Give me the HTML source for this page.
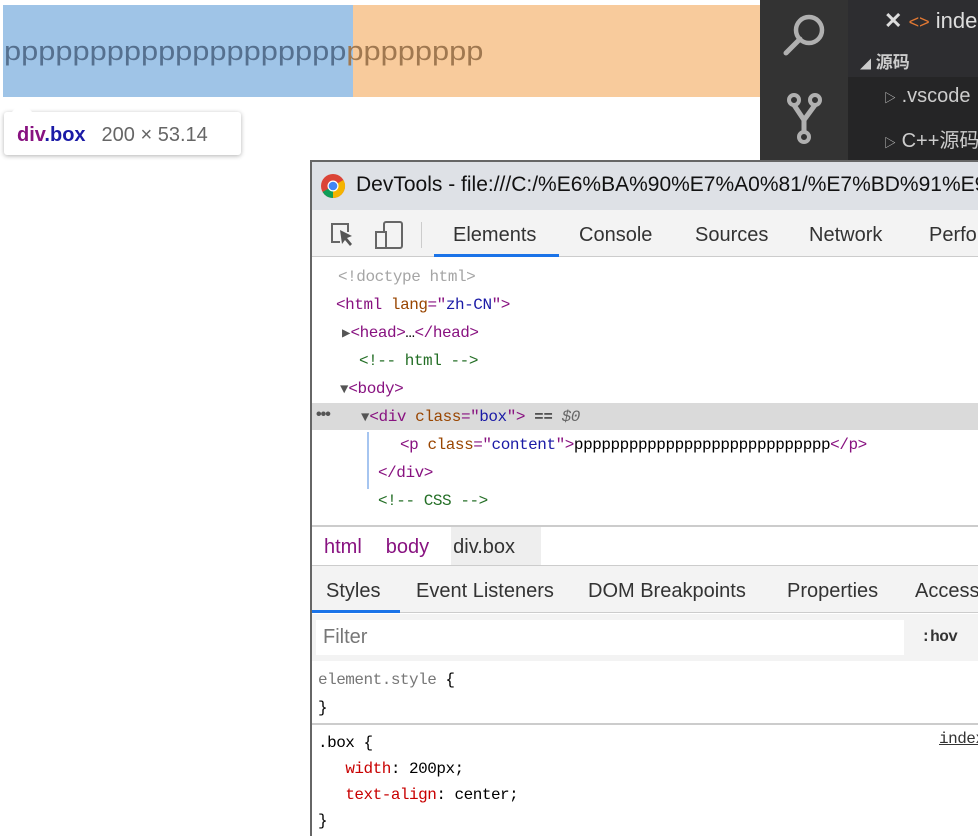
<!DOCTYPE html>
<html><head><meta charset="utf-8"><style>
*{margin:0;padding:0;box-sizing:border-box}
body{width:978px;height:836px;overflow:hidden;background:#fff;position:relative;font-family:"Liberation Sans","Noto Sans CJK SC",sans-serif}
.a{position:absolute}
.mono{font-family:"Liberation Mono","DejaVu Sans Mono",monospace;font-size:16px;letter-spacing:-0.45px;white-space:pre}
.m2{font-family:"Liberation Mono","DejaVu Sans Mono",monospace;font-size:15px;letter-spacing:-0.5px;white-space:pre}
.tg{color:#881280}.at{color:#994500}.av{color:#1a1aa6}.cm{color:#236e25}.br{color:#a5a5a5}
.tab{position:absolute;top:0;font-size:20px;color:#333;white-space:nowrap}
.tri{color:#555;font-size:14px;letter-spacing:0}
</style></head><body>
<div class="a" style="left:3px;top:5px;width:757px;height:92px;background:#f8cb9c"></div>
<div class="a" style="left:3px;top:5px;width:350px;height:92px;background:#9fc4e7"></div>
<div class="a" style="left:4px;top:36px;font-size:27px;color:#55708f;white-space:nowrap;transform:scaleX(1.14);transform-origin:0 0">pppppppppppppppppppp<span style="color:#a07850">pppppppp</span></div>
<div class="a" style="left:4px;top:112px;width:237px;height:43px;background:#fff;border-radius:3px;box-shadow:0 1px 5px rgba(0,0,0,.3)"></div>
<div class="a" style="left:12px;top:100px;width:0;height:0;border-left:10px solid transparent;border-right:10px solid transparent;border-bottom:12px solid #fff"></div>
<div class="a" style="left:17px;top:124px;font-size:20px;white-space:nowrap"><b style="color:#881280">div</b><b style="color:#1a1aa6">.box</b><span style="color:#666;margin-left:16px">200 × 53.14</span></div>
<!-- vscode -->
<div class="a" style="left:760px;top:0;width:218px;height:160px;background:#252526"></div>
<div class="a" style="left:760px;top:0;width:88px;height:160px;background:#333"></div>
<div class="a" style="left:848px;top:0;width:130px;height:77px;background:#2d2d30"></div>
<svg class="a" style="left:775px;top:8px" width="60" height="150" viewBox="0 0 60 150">
<circle cx="34" cy="22" r="13" fill="none" stroke="#b0b0b0" stroke-width="4.5"/>
<line x1="25" y1="31" x2="11" y2="45" stroke="#b0b0b0" stroke-width="5" stroke-linecap="round"/>
<circle cx="19" cy="92" r="5" fill="none" stroke="#b0b0b0" stroke-width="4"/>
<circle cx="40" cy="92" r="5" fill="none" stroke="#b0b0b0" stroke-width="4"/>
<circle cx="29" cy="129" r="5" fill="none" stroke="#b0b0b0" stroke-width="4"/>
<path d="M19 97 L29 112 L40 97 M29 112 L29 124" fill="none" stroke="#b0b0b0" stroke-width="5"/>
</svg>
<div class="a" style="left:884px;top:8px;font-size:22px;color:#ddd;white-space:nowrap"><b>✕</b> <span style="color:#e37933;font-size:18px">&lt;&gt;</span> inde</div>
<div class="a" style="left:860px;top:48px;font-size:17px;color:#ccc;white-space:nowrap"><span style="font-size:11px">◢</span> <b>源码</b></div>
<div class="a" style="left:884px;top:85px;font-size:20px;color:#ccc;white-space:nowrap"><span style="font-size:12px">▷</span> .vscode</div>
<div class="a" style="left:884px;top:124px;font-size:20px;color:#ccc;white-space:nowrap"><span style="font-size:12px">▷</span> C++源码</div>
<!-- devtools -->
<div class="a" style="left:310px;top:160px;width:668px;height:676px;background:#fff;border-left:2px solid #666;border-top:2px solid #666;overflow:hidden">
<div class="a" style="left:0;top:0;width:668px;height:48px;background:#dee1e6"></div>
<svg class="a" style="left:8px;top:11px" width="26" height="26" viewBox="0 0 26 26"><circle cx="13" cy="13" r="12" fill="#db4437"/><path d="M13 13 L2.6 19 A12 12 0 0 0 13 25 Z" fill="#0f9d58"/><path d="M13 13 L13 25 A12 12 0 0 0 23.4 7 Z" fill="#f4b400"/><circle cx="13" cy="13" r="5.5" fill="#fff"/><circle cx="13" cy="13" r="4.3" fill="#4285f4"/></svg>
<div class="a" style="left:44px;top:11px;font-size:21px;color:#111;white-space:nowrap">DevTools - file:///C:/%E6%BA%90%E7%A0%81/%E7%BD%91%E9%A1%B5</div>
<div class="a" style="left:0;top:48px;width:668px;height:47px;background:#f3f3f3;border-bottom:1px solid #ccc"></div>
<svg class="a" style="left:16px;top:58px" width="80" height="30" viewBox="0 0 80 30"><path d="M12 22 H4 V4 H20 V12" fill="none" stroke="#666" stroke-width="2"/><path d="M12 10 L24 16 L19 18 L24 24 L22 26 L17 20 L14 24 Z" fill="#555"/><rect x="56" y="2" width="18" height="26" rx="2" fill="none" stroke="#666" stroke-width="2"/><rect x="48" y="12" width="10" height="16" fill="#f3f3f3" stroke="#666" stroke-width="2"/></svg>
<div class="a" style="left:109px;top:60px;width:1px;height:26px;background:#ccc"></div>
<div class="a" style="left:0;top:62px;width:668px;height:30px">
<span class="tab" style="left:141px">Elements</span><span class="tab" style="left:267px">Console</span><span class="tab" style="left:383px">Sources</span><span class="tab" style="left:497px">Network</span><span class="tab" style="left:617px">Performance</span></div>
<div class="a" style="left:122px;top:92px;width:125px;height:3px;background:#1a73e8"></div>
<!-- tree -->
<div class="a" style="left:0;top:241px;width:668px;height:27px;background:#dadada"></div>
<div class="a" style="left:55px;top:270px;width:2px;height:57px;background:#a6c5f0"></div>
<div class="a mono" style="left:26px;top:106px"><span class="br">&lt;!doctype html&gt;</span></div>
<div class="a mono" style="left:24px;top:134px"><span class="tg">&lt;html</span> <span class="at">lang</span><span class="tg">="</span><span class="av">zh-CN</span><span class="tg">"&gt;</span></div>
<div class="a mono" style="left:30px;top:162px"><span class="tri">▶</span><span class="tg">&lt;head&gt;</span>…<span class="tg">&lt;/head&gt;</span></div>
<div class="a mono" style="left:47px;top:190px"><span class="cm">&lt;!-- html --&gt;</span></div>
<div class="a mono" style="left:28px;top:218px"><span class="tri">▼</span><span class="tg">&lt;body&gt;</span></div>
<div class="a mono" style="left:49px;top:246px"><span class="tri">▼</span><span class="tg">&lt;div</span> <span class="at">class</span><span class="tg">="</span><span class="av">box</span><span class="tg">"&gt;</span> == <i style="color:#666">$0</i></div>
<div class="a mono" style="left:88px;top:274px"><span class="tg">&lt;p</span> <span class="at">class</span><span class="tg">="</span><span class="av">content</span><span class="tg">"&gt;</span>pppppppppppppppppppppppppppp<span class="tg">&lt;/p&gt;</span></div>
<div class="a mono" style="left:66px;top:302px"><span class="tg">&lt;/div&gt;</span></div>
<div class="a mono" style="left:66px;top:330px"><span class="cm">&lt;!-- CSS --&gt;</span></div>
<div class="a" style="left:4px;top:244px;font-size:16px;color:#555;font-weight:bold;letter-spacing:-1px">•••</div>
<!-- breadcrumb -->
<div class="a" style="left:0;top:363px;width:668px;height:2px;background:#ccc"></div>
<div class="a" style="left:0;top:365px;width:668px;height:38px;background:#fff"></div>
<div class="a" style="left:139px;top:365px;width:90px;height:38px;background:#eee"></div>
<div class="a" style="left:12px;top:374px;font-size:20px;white-space:nowrap"><span style="color:#881280">html</span><span style="color:#881280;margin-left:24px">body</span><span style="color:#333;margin-left:24px">div.box</span></div>
<div class="a" style="left:0;top:403px;width:668px;height:48px;background:#f3f3f3;border-top:1px solid #ccc;border-bottom:1px solid #ccc"></div>
<div class="a" style="left:0;top:418px;width:668px;height:30px">
<span class="tab" style="left:14px">Styles</span><span class="tab" style="left:104px">Event Listeners</span><span class="tab" style="left:276px">DOM Breakpoints</span><span class="tab" style="left:475px">Properties</span><span class="tab" style="left:603px">Accessibility</span></div>
<div class="a" style="left:0;top:448px;width:88px;height:3px;background:#1a73e8"></div>
<div class="a" style="left:0;top:452px;width:668px;height:47px;background:#f3f3f3"></div>
<div class="a" style="left:4px;top:458px;width:588px;height:35px;background:#fff"></div>
<div class="a" style="left:11px;top:464px;font-size:20px;color:#777">Filter</div>
<div class="a m2" style="left:609px;top:466px;font-weight:bold;color:#333;font-size:16px">:hov</div>
<div class="a m2" style="left:6px;top:504px;line-height:28px;font-size:16px"><span style="color:#777">element.style</span> {
}</div>
<div class="a" style="left:0;top:561px;width:668px;height:2px;background:#ccc"></div>
<div class="a m2" style="left:6px;top:568px;line-height:26px;font-size:16px">.box {
   <span style="color:#c80000">width</span>: 200px;
   <span style="color:#c80000">text-align</span>: center;
}</div>
<div class="a m2" style="left:627px;top:568px;text-decoration:underline;color:#333;font-size:16px">index.html</div>
</div>
</body></html>
